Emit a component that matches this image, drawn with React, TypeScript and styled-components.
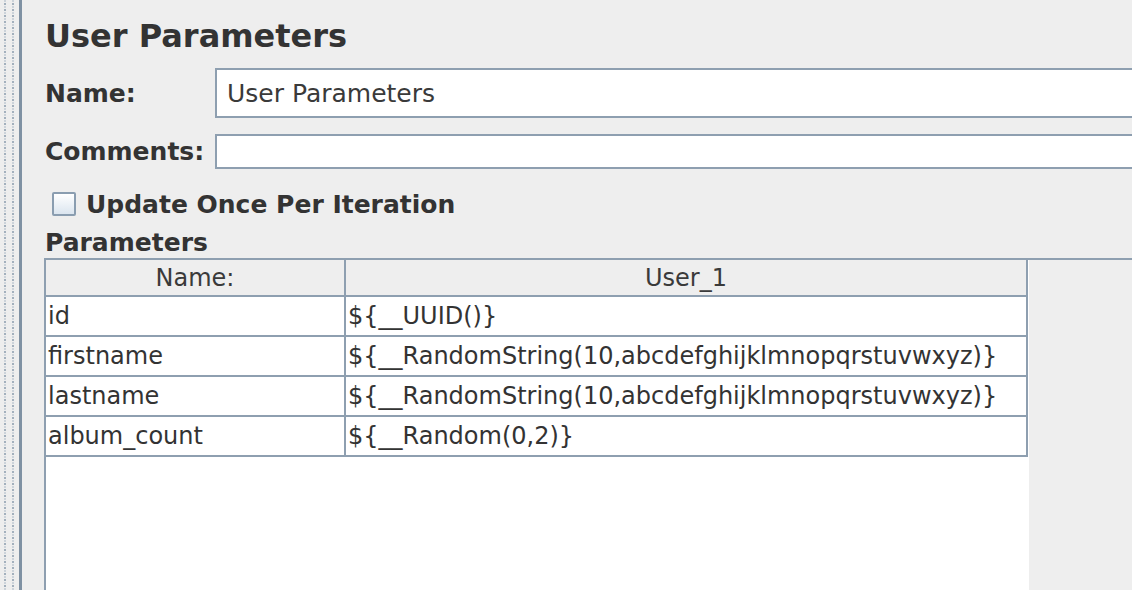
import React from "react";
import styled, { createGlobalStyle } from "styled-components";

const Global = createGlobalStyle`
  html, body { margin: 0; padding: 0; background: #eeeeee; }
  body { font-family: "DejaVu Sans", "Liberation Sans", sans-serif; color: #333333; }
  #root { width: 1132px; height: 590px; overflow: hidden; }
`;

const BORDER = "#8e9fb0";

const Frame = styled.div`
  display: flex;
  width: 1132px;
  height: 590px;
  overflow: hidden;
  background: #eeeeee;
`;

const Divider = styled.div`
  flex: 0 0 19px;
  height: 100%;
  background-color: #eeeeee;
  background-image:
    radial-gradient(circle, #a3b0bd 1.2px, transparent 1.5px),
    radial-gradient(circle, #ccd3da 1px, transparent 1.3px);
  background-size: 8px 6px, 8px 6px;
  background-position: 9px 1px, 1px 4px;
  border-right: 3px solid #7f91a3;
`;

const Panel = styled.div`
  flex: 1;
  display: flex;
  flex-direction: column;
  padding: 18px 0 0 22px;
  min-width: 0;
`;

const Title = styled.div`
  font-size: 32px;
  font-weight: bold;
  line-height: 36px;
  color: #333333;
  margin-left: 1px;
  margin-bottom: 14px;
  white-space: nowrap;
`;

const FieldRow = styled.div<{ $h: number; $mb: number }>`
  display: flex;
  align-items: center;
  height: ${(p) => p.$h}px;
  margin-bottom: ${(p) => p.$mb}px;
`;

const Label = styled.div<{ $w: number }>`
  flex: 0 0 ${(p) => p.$w}px;
  font-size: 25px;
  font-weight: bold;
  color: #333333;
  padding-left: 1px;
  box-sizing: border-box;
  white-space: nowrap;
`;

const Field = styled.div`
  flex: 1;
  height: 100%;
  box-sizing: border-box;
  background: #ffffff;
  border-top: 2px solid ${BORDER};
  border-left: 2px solid ${BORDER};
  border-bottom: 2px solid ${BORDER};
  display: flex;
  align-items: center;
  padding-left: 10px;
  font-size: 25px;
  color: #3a3a3a;
  white-space: nowrap;
`;

const CheckRow = styled.div`
  display: flex;
  align-items: center;
  gap: 10px;
  margin-left: 8px;
  height: 26px;
  margin-bottom: 13px;
`;

const Box = styled.div`
  width: 24px;
  height: 24px;
  box-sizing: border-box;
  border: 2px solid #8a9db0;
  border-radius: 2px;
  background: linear-gradient(180deg, #ffffff 0%, #dbe5ef 100%);
`;

const CheckLabel = styled.div`
  font-size: 25px;
  font-weight: bold;
  color: #333333;
  white-space: nowrap;
`;

const Section = styled.div`
  font-size: 25px;
  font-weight: bold;
  color: #333333;
  line-height: 26px;
  height: 26px;
  margin-bottom: 2px;
  padding-left: 1px;
`;

const Scroll = styled.div`
  flex: 1;
  display: flex;
  border-top: 2px solid ${BORDER};
  border-left: 2px solid ${BORDER};
  background: #eeeeee;
`;

const Viewport = styled.div`
  flex: 0 0 983px;
  background: #ffffff;
  display: flex;
  flex-direction: column;
`;

const Table = styled.div`
  display: grid;
  grid-template-columns: 300px 680px;
  width: 982px;
  border-right: 2px solid ${BORDER};
  box-sizing: border-box;
`;

const Head = styled.div<{ $last?: boolean }>`
  height: 37px;
  box-sizing: border-box;
  background: #eeeeee;
  border-bottom: 2px solid ${BORDER};
  border-right: ${(p) => (p.$last ? "none" : `2px solid ${BORDER}`)};
  display: flex;
  align-items: center;
  justify-content: center;
  font-size: 24px;
  color: #3a3a3a;
`;

const Cell = styled.div<{ $last?: boolean }>`
  height: 40px;
  box-sizing: border-box;
  border-bottom: 2px solid ${BORDER};
  border-right: ${(p) => (p.$last ? "none" : `2px solid ${BORDER}`)};
  display: flex;
  align-items: center;
  padding-left: 2px;
  font-size: 24px;
  color: #333333;
  white-space: nowrap;
  overflow: hidden;
`;

const rows: [string, string][] = [
  ["id", "${__UUID()}"],
  ["firstname", "${__RandomString(10,abcdefghijklmnopqrstuvwxyz)}"],
  ["lastname", "${__RandomString(10,abcdefghijklmnopqrstuvwxyz)}"],
  ["album_count", "${__Random(0,2)}"],
];

export default function App() {
  return (
    <Frame>
      <Global />
      <Divider />
      <Panel>
        <Title>User Parameters</Title>
        <FieldRow $h={50} $mb={16}>
          <Label $w={171}>Name:</Label>
          <Field>User Parameters</Field>
        </FieldRow>
        <FieldRow $h={35} $mb={22}>
          <Label $w={171}>Comments:</Label>
          <Field />
        </FieldRow>
        <CheckRow>
          <Box />
          <CheckLabel>Update Once Per Iteration</CheckLabel>
        </CheckRow>
        <Section>Parameters</Section>
        <Scroll>
          <Viewport>
            <Table>
              <Head>Name:</Head>
              <Head $last>User_1</Head>
              {rows.map(([k, v]) => (
                <React.Fragment key={k}>
                  <Cell>{k}</Cell>
                  <Cell $last>{v}</Cell>
                </React.Fragment>
              ))}
            </Table>
          </Viewport>
        </Scroll>
      </Panel>
    </Frame>
  );
}
